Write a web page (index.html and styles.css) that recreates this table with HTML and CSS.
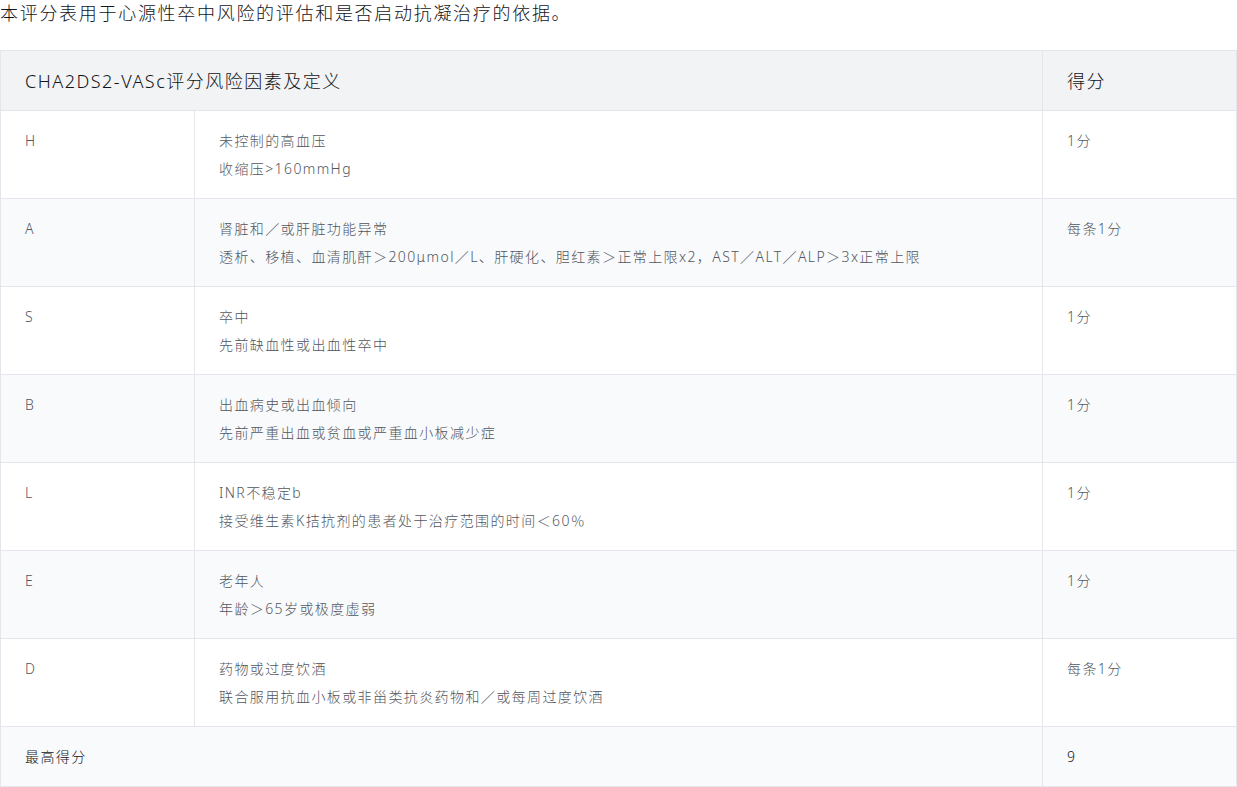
FILE: index.html
```html
<!DOCTYPE html>
<html lang="zh-CN">
<head>
<meta charset="utf-8">
<link rel="stylesheet" href="styles.css">
</head>
<body>
<p class="intro">本评分表用于心源性卒中风险的评估和是否启动抗凝治疗的依据。</p>
<table class="score">
  <colgroup>
    <col class="c1"><col class="c2"><col class="c3">
  </colgroup>
  <thead>
    <tr><th colspan="2"><div class="ln">CHA2DS2-VASc评分风险因素及定义</div></th><th><div class="ln">得分</div></th></tr>
  </thead>
  <tbody>
    <tr><td><div class="ln">H</div></td><td><div class="ln">未控制的高血压</div><div class="ln">收缩压&gt;160mmHg</div></td><td><div class="ln">1分</div></td></tr>
    <tr><td><div class="ln">A</div></td><td><div class="ln">肾脏和／或肝脏功能异常</div><div class="ln">透析、移植、血清肌酐＞200μmol／L、肝硬化、胆红素＞正常上限x2，AST／ALT／ALP＞3x正常上限</div></td><td><div class="ln">每条1分</div></td></tr>
    <tr><td><div class="ln">S</div></td><td><div class="ln">卒中</div><div class="ln">先前缺血性或出血性卒中</div></td><td><div class="ln">1分</div></td></tr>
    <tr><td><div class="ln">B</div></td><td><div class="ln">出血病史或出血倾向</div><div class="ln">先前严重出血或贫血或严重血小板减少症</div></td><td><div class="ln">1分</div></td></tr>
    <tr><td><div class="ln">L</div></td><td><div class="ln">INR不稳定b</div><div class="ln">接受维生素K拮抗剂的患者处于治疗范围的时间＜60％</div></td><td><div class="ln">1分</div></td></tr>
    <tr><td><div class="ln">E</div></td><td><div class="ln">老年人</div><div class="ln">年龄＞65岁或极度虚弱</div></td><td><div class="ln">1分</div></td></tr>
    <tr><td><div class="ln">D</div></td><td><div class="ln">药物或过度饮酒</div><div class="ln">联合服用抗血小板或非甾类抗炎药物和／或每周过度饮酒</div></td><td><div class="ln">每条1分</div></td></tr>
    <tr class="total"><td colspan="2"><div class="ln">最高得分</div></td><td><div class="ln">9</div></td></tr>
  </tbody>
</table>
</body>
</html>
```
FILE: styles.css
```css
html, body {
  margin: 0;
  padding: 0;
  background: #fff;
}
body {
  font-family: "Noto Sans", "Noto Sans CJK SC", sans-serif;
  color: #1f2329;
  font-weight: 300;
}
.intro {
  margin: 0 0 22px;
  height: 28px;
  overflow: hidden;
  font-size: 18px;
  line-height: 26px;
  letter-spacing: 1.7px;
  color: #111418;
}
.score {
  width: 1237px;
  border-collapse: collapse;
  table-layout: fixed;
}
.score .c1 { width: 194px; }
.score .c3 { width: 194px; }
.score th, .score td {
  border: 1px solid #e5e6eb;
  text-align: left;
  vertical-align: top;
  padding: 16px 24px 15px;
}
.ln {
  height: 28px;
  line-height: 28px;
  white-space: nowrap;
}
.score th {
  background: #f2f3f5;
  font-weight: 300;
  font-size: 18px;
  letter-spacing: 1.5px;
  color: #111418;
}
.score td {
  font-size: 14px;
  letter-spacing: 1.4px;
  font-weight: 300;
  color: #51565e;
}
.score tbody tr:nth-child(even) td {
  background: #f9fafb;
}
.score .total td {
  color: #111418;
}
```
